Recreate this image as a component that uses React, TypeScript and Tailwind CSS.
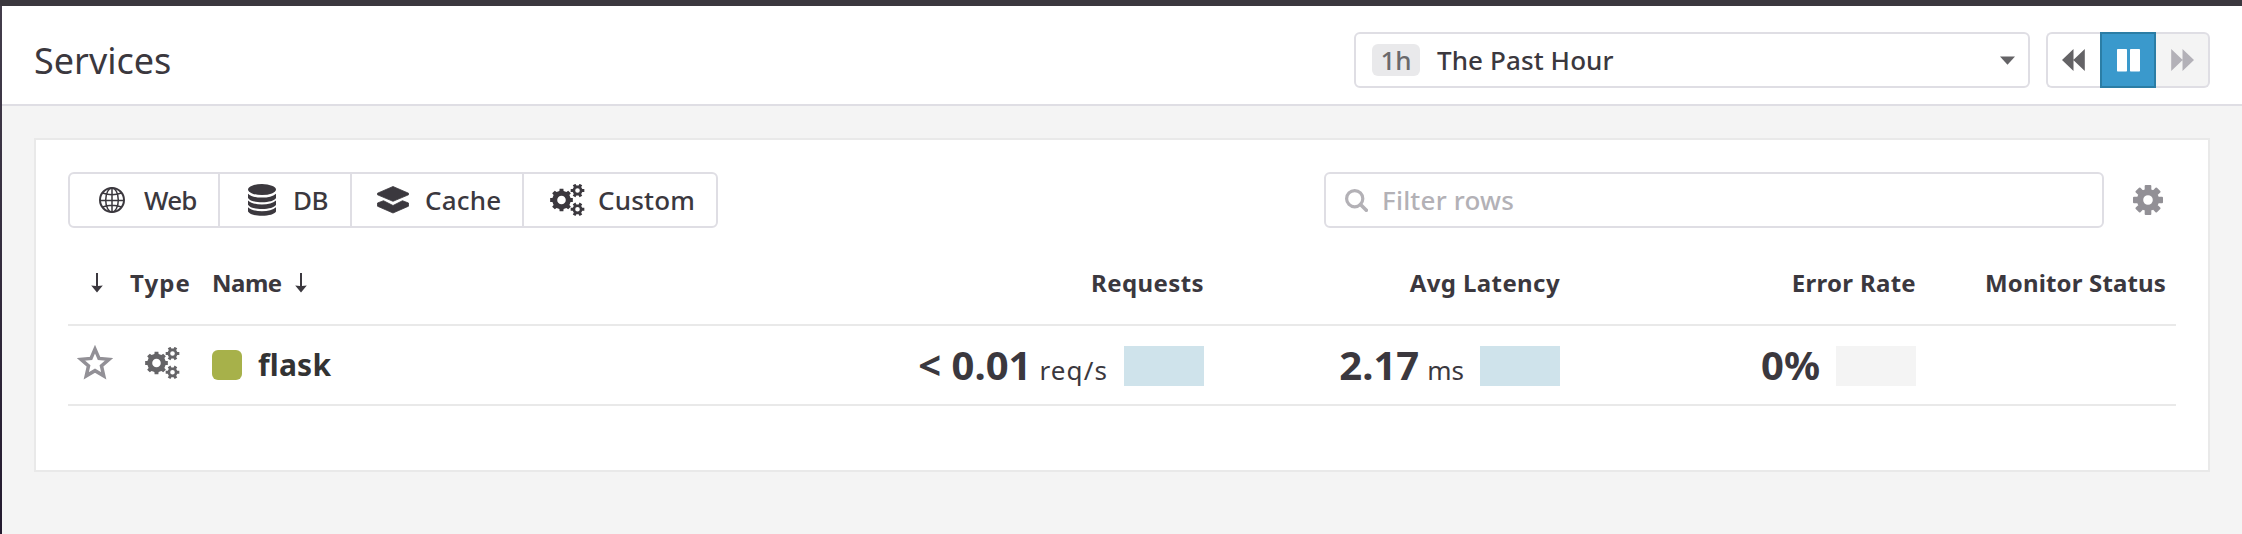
import type { ReactNode } from "react";

/* Outline of a cog wheel with evenly spaced teeth and a round hole. */
function gearPath(cx: number, cy: number, outer: number, root: number, hole: number, teeth: number, start = 0) {
  const step = (Math.PI * 2) / teeth;
  const pts: string[] = [];
  for (let i = 0; i < teeth; i++) {
    const a = start + i * step;
    const corners: [number, number][] = [
      [root, a - step * 0.29],
      [outer, a - step * 0.21],
      [outer, a + step * 0.21],
      [root, a + step * 0.29],
    ];
    corners.forEach(([r, t]) => pts.push(`${(cx + r * Math.cos(t)).toFixed(2)} ${(cy + r * Math.sin(t)).toFixed(2)}`));
  }
  return `M${pts.join("L")}ZM${cx - hole} ${cy}a${hole} ${hole} 0 1 0 ${hole * 2} 0a${hole} ${hole} 0 1 0 ${-hole * 2} 0Z`;
}

function Cogs() {
  return (
    <svg className="h-8 w-[35px] shrink-0" viewBox="0 0 35 32" fill="currentColor" fillRule="evenodd">
      <path d={gearPath(11.5, 16, 11.5, 9.3, 4.3, 8)} />
      <path d={gearPath(27.5, 6.5, 7, 5, 2.3, 6)} />
      <path d={gearPath(27.5, 25.3, 7, 5, 2.3, 6)} />
    </svg>
  );
}

function Cog() {
  return (
    <svg className="size-8" viewBox="0 0 32 32" fill="currentColor" stroke="currentColor" strokeWidth="2" strokeLinejoin="round" fillRule="evenodd">
      <path d={gearPath(16, 16, 14.2, 10.2, 5.8, 8)} />
    </svg>
  );
}

function Globe() {
  return (
    <svg className="size-[26px] shrink-0" viewBox="0 0 26 26" fill="none" stroke="currentColor" strokeWidth="1.5">
      <circle cx="13" cy="13" r="12" strokeWidth="2" />
      <ellipse cx="13" cy="13" rx="6.3" ry="12" />
      <path d="M13 1V25M1 13.6H25M3.5 6Q13 9.4 22.5 6M3.5 20Q13 16.6 22.5 20" />
    </svg>
  );
}

function Database() {
  return (
    <svg className="h-8 w-7 shrink-0" viewBox="0 0 28 32" fill="currentColor">
      <ellipse cx="14" cy="5.6" rx="14" ry="5.5" />
      {[0, 6.8, 13.6].map((y) => (
        <path key={y} transform={`translate(0 ${y})`} d="M0 9.7C3 12.6 8 13.600 14 13.600S25 12.600 28 9.700V14C26.500 16.800 21 18.200 14 18.200S1.500 16.800 0 14Z" />
      ))}
    </svg>
  );
}

function Layers() {
  return (
    <svg className="h-7 w-8 shrink-0" viewBox="0 0 32 28" fill="currentColor" stroke="currentColor" strokeWidth="0.8" strokeLinejoin="round">
      <path d="M16 .5L31.500 7.200V8.800L16 15.300L.5 8.800V7.200Z" />
      <path d="M.5 17L6.500 14.700L16 19.500L25.500 14.700L31.500 17V20.200L16 27L.5 20.200Z" />
    </svg>
  );
}

function SortArrow() {
  return (
    <svg className="h-5 w-3 shrink-0" viewBox="0 0 12 20" fill="currentColor">
      <path d="M5 0H7V13L11.800 12.400L6 19.500L.2 12.400L5 13Z" />
    </svg>
  );
}

function TypeButton({ className, children }: { className: string; children: ReactNode }) {
  return (
    <button className={`flex items-center border-[#dfdee4] text-[26px] leading-none font-medium ${className}`}>{children}</button>
  );
}

function Metric({ value, unit, unitClass, bar }: { value: string; unit?: string; unitClass?: string; bar: string }) {
  return (
    <div className="flex items-center justify-end">
      <div className="flex items-baseline gap-2 whitespace-nowrap">
        <span className="text-[40px] leading-[40px] font-bold">{value}</span>
        {unit && <span className={`text-[26px] leading-[26px] ${unitClass ?? ""}`}>{unit}</span>}
      </div>
      <div className={`relative top-px ml-4 h-10 w-20 ${bar}`} />
    </div>
  );
}

const columns = "grid grid-cols-[62px_82px_688px_304px_356px_356px_260px]";

export default function App() {
  return (
    <div className="flex h-[534px] w-[2242px] flex-col overflow-hidden bg-[#f4f4f4] font-['Noto_Sans','Open_Sans',sans-serif] text-[#3b383e]">
      <div className="h-1.5 shrink-0 bg-[#3b383e]" />
      <div className="flex min-h-0 flex-1">
        <div className="w-0.5 shrink-0 bg-linear-to-b from-[#433d4b] to-[#231a2f]" />
        <div className="min-w-0 flex-1">
          <header className="flex h-[100px] items-start border-b-2 border-[#dfdee4] bg-white pt-[26px] pr-8 pl-8">
            <h1 className="flex-1 text-[36px] leading-[57px]">Services</h1>
            <div className="flex h-14 w-[676px] items-center rounded-md border-2 border-[#dfdee4] pr-[13px] pl-4">
              <span className="flex h-8 w-12 items-center justify-center rounded-md bg-[#e9e9eb] text-[26px] leading-none font-medium text-[#6a696c]">1h</span>
              <span className="ml-[17px] flex-1 text-[26px] leading-none font-medium tracking-[0.1px]">The Past Hour</span>
              <svg className="h-[9px] w-[15px]" viewBox="0 0 15 9" fill="#646366"><path d="M0 .5H15L7.500 8.700Z" /></svg>
            </div>
            <div className="ml-4 flex h-14 w-[164px]">
              <button className="flex w-[54px] items-center justify-center rounded-l-md border-2 border-r-0 border-[#dfdee4]">
                <svg className="mr-[1px] h-[22px] w-[23px]" viewBox="0 0 23 22" fill="#646366"><path d="M11.500 0V22L0 11ZM22.800 0V22L11.300 11Z" /></svg>
              </button>
              <button className="flex w-14 items-center justify-center border-2 border-[#2b7da5] bg-[#3a99cc]">
                <svg className="h-[23px] w-[23px]" viewBox="0 0 23 23" fill="#fff"><rect width="10" height="22.500" rx=".7" /><rect x="13" width="10" height="22.500" rx=".7" /></svg>
              </button>
              <button className="flex w-[54px] items-center justify-center rounded-r-md border-2 border-l-0 border-[#dfdee4] bg-[#f4f4f4]">
                <svg className="ml-[1px] h-[22px] w-[23px]" viewBox="0 0 23 22" fill="#b3b1b8"><path d="M.2 0V22L11.700 11ZM11.500 0V22L23 11Z" /></svg>
              </button>
            </div>
          </header>

          <main className="mt-8 ml-8 h-[334px] w-[2176px] border-2 border-[#e9e9e9] bg-white px-8 pt-8">
            <div className="flex h-14 items-center">
              <div className="flex h-14 w-[650px] rounded-md border-2 border-[#dfdee4]">
                <TypeButton className="w-[150px] border-r-2 pl-[29px]">
                  <Globe />
                  <span className="ml-[19px] tracking-[-0.8px]">Web</span>
                </TypeButton>
                <TypeButton className="w-[132px] border-r-2 pl-7">
                  <Database />
                  <span className="ml-[17px] tracking-[-0.5px]">DB</span>
                </TypeButton>
                <TypeButton className="w-[172px] border-r-2 pl-[25px]">
                  <Layers />
                  <span className="ml-4 tracking-[0.2px]">Cache</span>
                </TypeButton>
                <TypeButton className="flex-1 pl-[26px]">
                  <Cogs />
                  <span className="ml-[13px] tracking-[0.2px]">Custom</span>
                </TypeButton>
              </div>
              <div className="ml-auto flex h-14 w-[780px] items-center rounded-md border-2 border-[#dfdee4] pl-[19px] text-[#b3b1b6]">
                <svg className="size-[23px]" viewBox="0 0 23 23" fill="none" stroke="currentColor">
                  <circle cx="9.700" cy="9.700" r="8.100" strokeWidth="3.200" />
                  <path d="M15.500 15.500L21.300 21.300" strokeWidth="3.600" strokeLinecap="round" />
                </svg>
                <span className="ml-[14px] text-[26px] leading-none font-medium tracking-[0.2px]">Filter rows</span>
              </div>
              <button className="mr-3 ml-7 text-[#929096]"><Cog /></button>
            </div>

            <div className={`${columns} h-[98px] items-center border-b-2 border-[#e9e9e9] pt-[13px] text-[24px] leading-none font-bold`}>
              <div className="pl-[23px]"><SortArrow /></div>
              <div className="tracking-[1.1px]">Type</div>
              <div className="flex items-center gap-[13px]"><span className="tracking-[-0.5px]">Name</span><SortArrow /></div>
              <div className="text-right tracking-[0.4px]">Requests</div>
              <div className="text-right tracking-[0.4px]">Avg Latency</div>
              <div className="text-right tracking-[0.3px]">Error Rate</div>
              <div className="pr-[10px] text-right tracking-[0.15px]">Monitor Status</div>
            </div>

            <div className={`${columns} h-20 items-center border-b-2 border-[#e9e9e9]`}>
              <div className="pl-[9px]">
                <svg className="-mt-1.5 h-[35px] w-[36px]" viewBox="0 0 35 34" fill="none" stroke="#929096" strokeWidth="3.400">
                  <path d="M17.500 4L21.400 13L31.200 13.900L23.800 20.300L26 30L17.500 24.900L9 30L11.200 20.300L3.800 13.900L13.600 13Z" />
                </svg>
              </div>
              <div className="-mt-1 pl-[15px] text-[#656467]"><Cogs /></div>
              <div className="flex items-center">
                <span className="size-[30px] rounded-md bg-[#a7b14a]" />
                <span className="ml-4 text-[30px] leading-none font-bold tracking-[0.2px] text-[#333]">flask</span>
              </div>
              <Metric value="< 0.01" unit="req/s" unitClass="tracking-[1.1px]" bar="bg-[#cfe3eb]" />
              <Metric value="2.17" unit="ms" bar="bg-[#cfe3eb]" />
              <Metric value="0%" bar="bg-[#f4f4f4]" />
              <div />
            </div>
          </main>
        </div>
      </div>
    </div>
  );
}
